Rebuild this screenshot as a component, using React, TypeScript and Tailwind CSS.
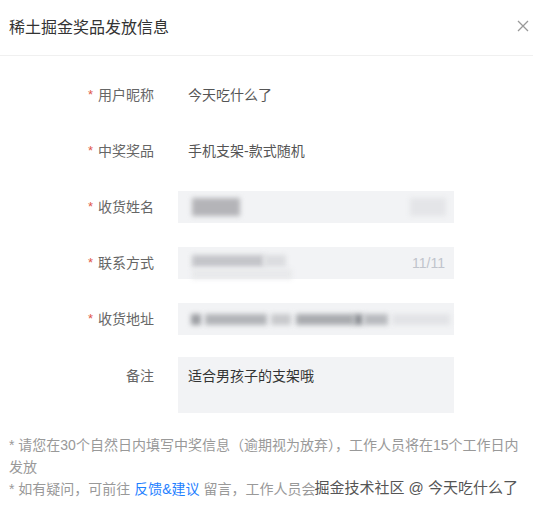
import React from "react";

function Row({
  label,
  required = true,
  children,
  className = "h-8",
}: {
  label: string;
  required?: boolean;
  children: React.ReactNode;
  className?: string;
}) {
  return (
    <div className={`flex items-center ${className}`}>
      <div className="flex w-[154px] items-center justify-end text-sm text-[#666]">
        {required && <span className="mr-[5px] text-[13px] text-[#e0574a]">*</span>}
        {label}
      </div>
      <div className="ml-[24px] flex h-full w-[276px] items-center">{children}</div>
    </div>
  );
}

function Blur({ className }: { className: string }) {
  return <span className={`absolute blur-[2.5px] ${className}`} />;
}

export default function App() {
  return (
    <div
      className="relative h-[513px] w-[533px] overflow-hidden bg-white"
      style={{ fontFamily: '"Liberation Sans", "Noto Sans CJK SC", sans-serif' }}
    >
      <div className="flex h-14 items-center justify-between border-b border-[#f0f0f0] pl-[9px] pr-[4px]">
        <h2 className="text-base text-[#333]">稀土掘金奖品发放信息</h2>
        <svg width="12" height="12" viewBox="0 0 12 12" className="mb-[4px]" stroke="#999" strokeWidth="1.3">
          <path d="M1 1l10 10M11 1L1 11" />
        </svg>
      </div>

      <div className="flex flex-col gap-6 pt-[23px]">
        <Row label="用户昵称">
          <span className="pl-[10px] text-sm text-[#555]">今天吃什么了</span>
        </Row>
        <Row label="中奖奖品">
          <span className="pl-[10px] text-sm text-[#555]">手机支架-款式随机</span>
        </Row>
        <Row label="收货姓名">
          <div className="relative h-full w-full bg-[#f2f3f5]">
            <Blur className="left-[14px] top-[7px] h-[18px] w-[48px] bg-[#b4b4b8]" />
            <Blur className="right-[8px] top-[7px] h-[18px] w-[36px] bg-[#e4e5e8]" />
          </div>
        </Row>
        <Row label="联系方式">
          <div className="relative flex h-full w-full items-center justify-end bg-[#f2f3f5] pr-[9px]">
            <Blur className="left-[14px] top-[8px] h-[12px] w-[72px] bg-[#c4c5c9]" />
            <Blur className="left-[86px] top-[8px] h-[12px] w-[22px] bg-[#dcdde0]" />
            <Blur className="left-[14px] top-[22px] h-[10px] w-[100px] bg-[#e8e9eb]" />
            <span className="text-sm text-[#c0c4cc]">11/11</span>
          </div>
        </Row>
        <Row label="收货地址">
          <div className="relative h-full w-full bg-[#f2f3f5]">
            <Blur className="left-[13px] top-[11px] h-[11px] w-[10px] bg-[#9c9ea3]" />
            <Blur className="left-[27px] top-[11px] h-[11px] w-[62px] bg-[#b2b4b8]" />
            <Blur className="left-[93px] top-[11px] h-[11px] w-[20px] bg-[#c8c9cc]" />
            <Blur className="left-[118px] top-[11px] h-[11px] w-[58px] bg-[#a9abaf]" />
            <Blur className="left-[176px] top-[11px] h-[11px] w-[9px] bg-[#8e9196]" />
            <Blur className="left-[186px] top-[11px] h-[11px] w-[24px] bg-[#b8babe]" />
            <Blur className="left-[214px] top-[11px] h-[11px] w-[58px] bg-[#e2e3e6]" />
          </div>
        </Row>
        <div className="-mt-[2px] flex items-start">
          <div className="flex h-[38px] w-[154px] items-center justify-end text-sm text-[#666]">备注</div>
          <div className="ml-[24px] h-14 w-[276px] bg-[#f2f3f5] px-[10px] pt-[8px] text-sm leading-[22px] text-[#333]">
            适合男孩子的支架哦
          </div>
        </div>
      </div>

      <div className="relative mt-[21px] px-[9px] text-sm leading-[22px] text-[#999]">
        <p>* 请您在30个自然日内填写中奖信息（逾期视为放弃），工作人员将在15个工作日内发放</p>
        <p className="whitespace-nowrap">
          * 如有疑问，可前往 <span className="text-[#1e80ff]">反馈&amp;建议</span> 留言，工作人员会
        </p>
        <span
          className="absolute bottom-[1px] right-[15px] text-[15px] text-[#555]"
          style={{ textShadow: "0 0 2px #fff, 0 0 2px #fff" }}
        >
          掘金技术社区 @ 今天吃什么了
        </span>
      </div>
    </div>
  );
}
